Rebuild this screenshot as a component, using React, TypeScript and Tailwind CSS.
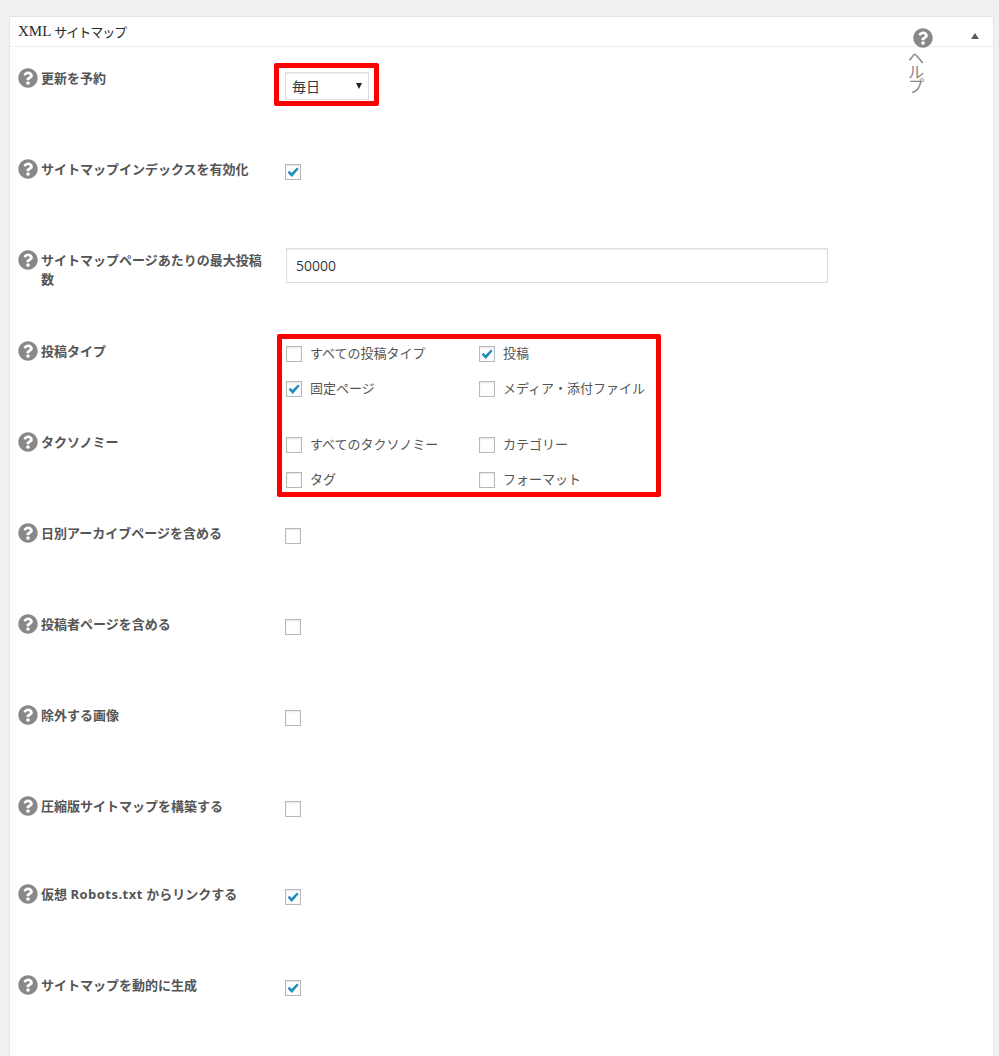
import type { ReactNode } from "react";
import { FaQuestionCircle } from "react-icons/fa";

const jpFont = "font-['Open_Sans','Noto_Sans_CJK_JP',sans-serif]";

function HelpIcon() {
  return <FaQuestionCircle className="w-5 h-5 shrink-0 -mt-px text-[#888]" />;
}

function Checkbox({ checked }: { checked?: boolean }) {
  return (
    <span className="w-4 h-4 shrink-0 bg-white border border-[#b4b9be] shadow-[inset_0_1px_2px_rgba(0,0,0,0.1)] flex items-center justify-center">
      {checked && (
        <svg viewBox="0 0 16 16" className="w-4 h-4 shrink-0">
          <path d="M2.6 8.6 L4.4 6.8 L6.5 9 L12 3.4 L13.6 4.9 L6.8 13 Z" fill="#1e8cbe" />
        </svg>
      )}
    </span>
  );
}

function CheckItem({ label, checked }: { label: string; checked?: boolean }) {
  return (
    <div className="flex items-center gap-2 w-[193px] h-4">
      <Checkbox checked={checked} />
      <span className="text-[13px] text-[#555] whitespace-nowrap">{label}</span>
    </div>
  );
}

function Row({ label, height = "h-[91px]", children }: { label: ReactNode; height?: string; children?: ReactNode }) {
  return (
    <div className={`flex ${height}`}>
      <div className="flex gap-[3px] w-[267px] pl-2 pt-[22px]">
        <HelpIcon />
        <span className="w-[224px] text-[13px] leading-[19px] font-bold text-[#555]">{label}</span>
      </div>
      {children}
    </div>
  );
}

function SingleCheck({ checked }: { checked?: boolean }) {
  return (
    <div className="pt-[26px] pl-[8px]">
      <Checkbox checked={checked} />
    </div>
  );
}

export default function App() {
  return (
    <div className={`relative w-[999px] h-[1056px] overflow-hidden bg-[#f1f1f1] pt-4 pl-[9px] pr-[5px] ${jpFont}`}>
      <div className="relative bg-white border border-[#e5e5e5] h-[1100px]">
        <div className="flex items-center h-[30px] pl-[8px] border-b border-[#eee] text-[#23282d]">
          <span className="font-['Liberation_Serif',serif] text-[15px]">XML</span>
          <span className="ml-[3px] font-['Noto_Sans_CJK_JP',sans-serif] text-[13px] tracking-[-1px]">サイトマップ</span>
        </div>

        <div className="absolute left-[903px] top-[11px] w-5 flex flex-col items-center">
          <FaQuestionCircle className="w-5 h-5 text-[#888]" />
        </div>
        <div className="absolute left-[898px] top-[34px] w-4 text-[16px] leading-[14px] text-[#888] break-all">ヘルプ</div>
        <div className="absolute left-[961px] top-[16px] w-0 h-0 border-x-[4px] border-x-transparent border-b-[6px] border-b-[#555d66]" />

        <Row label="更新を予約">
          <div className="pt-[25px] pl-[8px]">
            <div className="flex items-center justify-between w-[84px] h-7 pl-[6px] pr-[6px] border border-[#ddd] text-[14px] text-[#32373c] shadow-[inset_0_1px_2px_rgba(0,0,0,0.07)]">
              毎日
              <span className="w-0 h-0 border-x-[3px] border-x-transparent border-t-[6px] border-t-[#222]" />
            </div>
          </div>
        </Row>

        <Row label="サイトマップインデックスを有効化">
          <SingleCheck checked />
        </Row>

        <Row label="サイトマップページあたりの最大投稿数">
          <div className="pt-[19px] pl-[9px]">
            <div className="flex items-center w-[542px] h-[35px] pl-[9px] border border-[#ddd] text-[14px] text-[#32373c] shadow-[inset_0_1px_2px_rgba(0,0,0,0.07)]">
              50000
            </div>
          </div>
        </Row>

        <Row label="投稿タイプ">
          <div className="pt-[26px] pl-[9px] flex flex-wrap content-start w-[400px] gap-y-[19px]">
            <CheckItem label="すべての投稿タイプ" />
            <CheckItem label="投稿" checked />
            <CheckItem label="固定ページ" checked />
            <CheckItem label="メディア・添付ファイル" />
          </div>
        </Row>

        <Row label="タクソノミー">
          <div className="pt-[26px] pl-[9px] flex flex-wrap content-start w-[400px] gap-y-[19px]">
            <CheckItem label="すべてのタクソノミー" />
            <CheckItem label="カテゴリー" />
            <CheckItem label="タグ" />
            <CheckItem label="フォーマット" />
          </div>
        </Row>

        <Row label="日別アーカイブページを含める">
          <SingleCheck />
        </Row>
        <Row label="投稿者ページを含める">
          <SingleCheck />
        </Row>
        <Row label="除外する画像">
          <SingleCheck />
        </Row>
        <Row label="圧縮版サイトマップを構築する" height="h-[88px]">
          <SingleCheck />
        </Row>
        <Row label={<>仮想 <span className="tracking-[0.5px]">Robots.txt</span> からリンクする</>}>
          <SingleCheck checked />
        </Row>
        <Row label="サイトマップを動的に生成">
          <SingleCheck checked />
        </Row>
      </div>

      {/* red annotation boxes */}
      <div className="absolute left-[274px] top-[63px] w-[105px] h-[43px] border-[5px] border-[#f00] rounded-[2px]" />
      <div className="absolute left-[277px] top-[334px] w-[384px] h-[163px] border-[5px] border-[#f00] rounded-[2px]" />
    </div>
  );
}
